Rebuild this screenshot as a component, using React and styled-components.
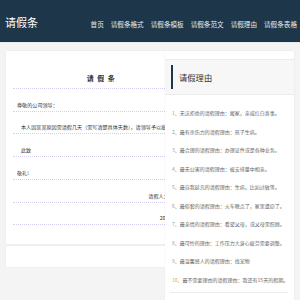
import React from 'react'
import styled, { createGlobalStyle } from 'styled-components'

const GlobalStyle = createGlobalStyle`
  html, body {
    margin: 0;
    padding: 0;
    background: #f4f4f4;
    overflow: hidden;
  }
  body {
    font-family: "Noto Sans CJK SC", "Noto Sans", sans-serif;
  }
`

const Header = styled.header`
  height: 42px;
  background: #1d3649;
  border-bottom: 1px solid #e6eaee;
  display: flex;
  align-items: center;
  justify-content: space-between;
  padding: 0 3px 0 5px;
`

const Logo = styled.div`
  color: #fff;
  font-size: 11px;
  line-height: 1;
  padding-top: 2px;
`

const Nav = styled.nav`
  display: flex;
  gap: 7px;
  padding-top: 5px;
`

const NavItem = styled.a`
  color: #e4eaee;
  font-size: 6.6px;
  text-decoration: none;
`

const Main = styled.main`
  display: flex;
  align-items: flex-start;
  padding: 8px 6px 0;
`

const LeftCol = styled.div`
  width: 159px;
  display: flex;
  flex-direction: column;
  gap: 2px;
`

const Card = styled.div`
  background: #fff;
  box-sizing: border-box;
  height: ${p => p.$h}px;
  overflow: hidden;
  box-shadow: 0 0 1px rgba(0, 0, 0, 0.12);
`

const Sheet = styled.div`
  width: 176px;
  margin-left: 7px;
  padding-top: 15px;
`

const Row = styled.div`
  height: 22.75px;
  box-sizing: border-box;
  border-bottom: 1px dotted #d6cff3;
  display: flex;
  align-items: flex-end;
  justify-content: ${p => p.$align || 'flex-start'};
  padding: 0 ${p => p.$right || 4}px 3px ${p => p.$indent || 4}px;
  color: #333;
  font-size: 5.1px;
  line-height: 7px;
  white-space: nowrap;
`

const SheetTitle = styled(Row)`
  font-size: 7px;
  font-weight: bold;
  letter-spacing: 3.5px;
  line-height: 9px;
  padding-bottom: 5px;
  padding-left: 7px;
`

const RightCol = styled.aside`
  width: 129px;
  background: #fff;
  padding-top: 8px;
  height: 241px;
  box-shadow: 0 0 1px rgba(0, 0, 0, 0.12);
`

const PanelHead = styled.div`
  height: 36px;
  box-sizing: border-box;
  background: #f7f7f7;
  border-top: 1px solid #ececec;
  border-bottom: 1px solid #ececec;
  display: flex;
  align-items: center;
  padding-left: 6px;
  color: #333;
  font-size: 8.3px;

  &::before {
    content: '';
    width: 2px;
    height: 24px;
    background: #1d3649;
    margin-right: 6px;
  }
`

const ReasonList = styled.ul`
  list-style: none;
  margin: 0 6px 0 5px;
  padding: 9px 2px 3px;
  border-bottom: 1px solid #ececec;
`

const Reason = styled.li`
  height: 18.5px;
  line-height: 18.5px;
  font-size: 5px;
  color: #666;
  white-space: nowrap;
`

const Num = styled.span`
  color: ${p => (p.$hot ? '#d9a55c' : '#999')};
`

const navItems = ['首页', '请假条格式', '请假条模板', '请假条范文', '请假理由', '请假条表格']

const reasons = [
  '无法拒绝的请假理由：搬家，亲戚红白喜事。',
  '最有杀伤力的请假理由：孩子生病。',
  '最合理的请假理由：办理证件或是各种业务。',
  '最无公害的请假理由：被安排量中相亲。',
  '最自我延究的请假理由：生病，比如过敏等。',
  '最俗套的请假理由：火车晚点了，家里遭窃了。',
  '最亲情的请假理由：看望父母，或父母需照顾。',
  '最可怜的理由：工作压力大身心疲劳需要调整。',
  '最温馨感人的请假理由：找宠物',
  '最不需要理由的请假理由：我还有15天的假期。',
]

export default function App() {
  return (
    <>
      <GlobalStyle />
      <Header>
        <Logo>请假条</Logo>
        <Nav>
          {navItems.map(n => (
            <NavItem key={n} href="#">{n}</NavItem>
          ))}
        </Nav>
      </Header>
      <Main>
        <LeftCol>
          <Card $h={193}>
            <Sheet>
              <SheetTitle $align="center">请假条</SheetTitle>
              <Row>尊敬的公司领导：</Row>
              <Row $indent={8}>本人因某某原因需请假几天（需写清楚具体天数），请领导予以批准。</Row>
              <Row $indent={8}>此致</Row>
              <Row>敬礼!</Row>
              <Row $align="flex-end" $right={5}>请假人：某某某</Row>
              <Row $align="flex-end" $right={5}>2020年1月</Row>
            </Sheet>
          </Card>
          <Card $h={21} />
        </LeftCol>
        <RightCol>
          <PanelHead>请假理由</PanelHead>
          <ReasonList>
            {reasons.map((r, i) => (
              <Reason key={i}>
                <Num $hot={i === 9}>{i + 1}、</Num>
                {r}
              </Reason>
            ))}
          </ReasonList>
        </RightCol>
      </Main>
    </>
  )
}
